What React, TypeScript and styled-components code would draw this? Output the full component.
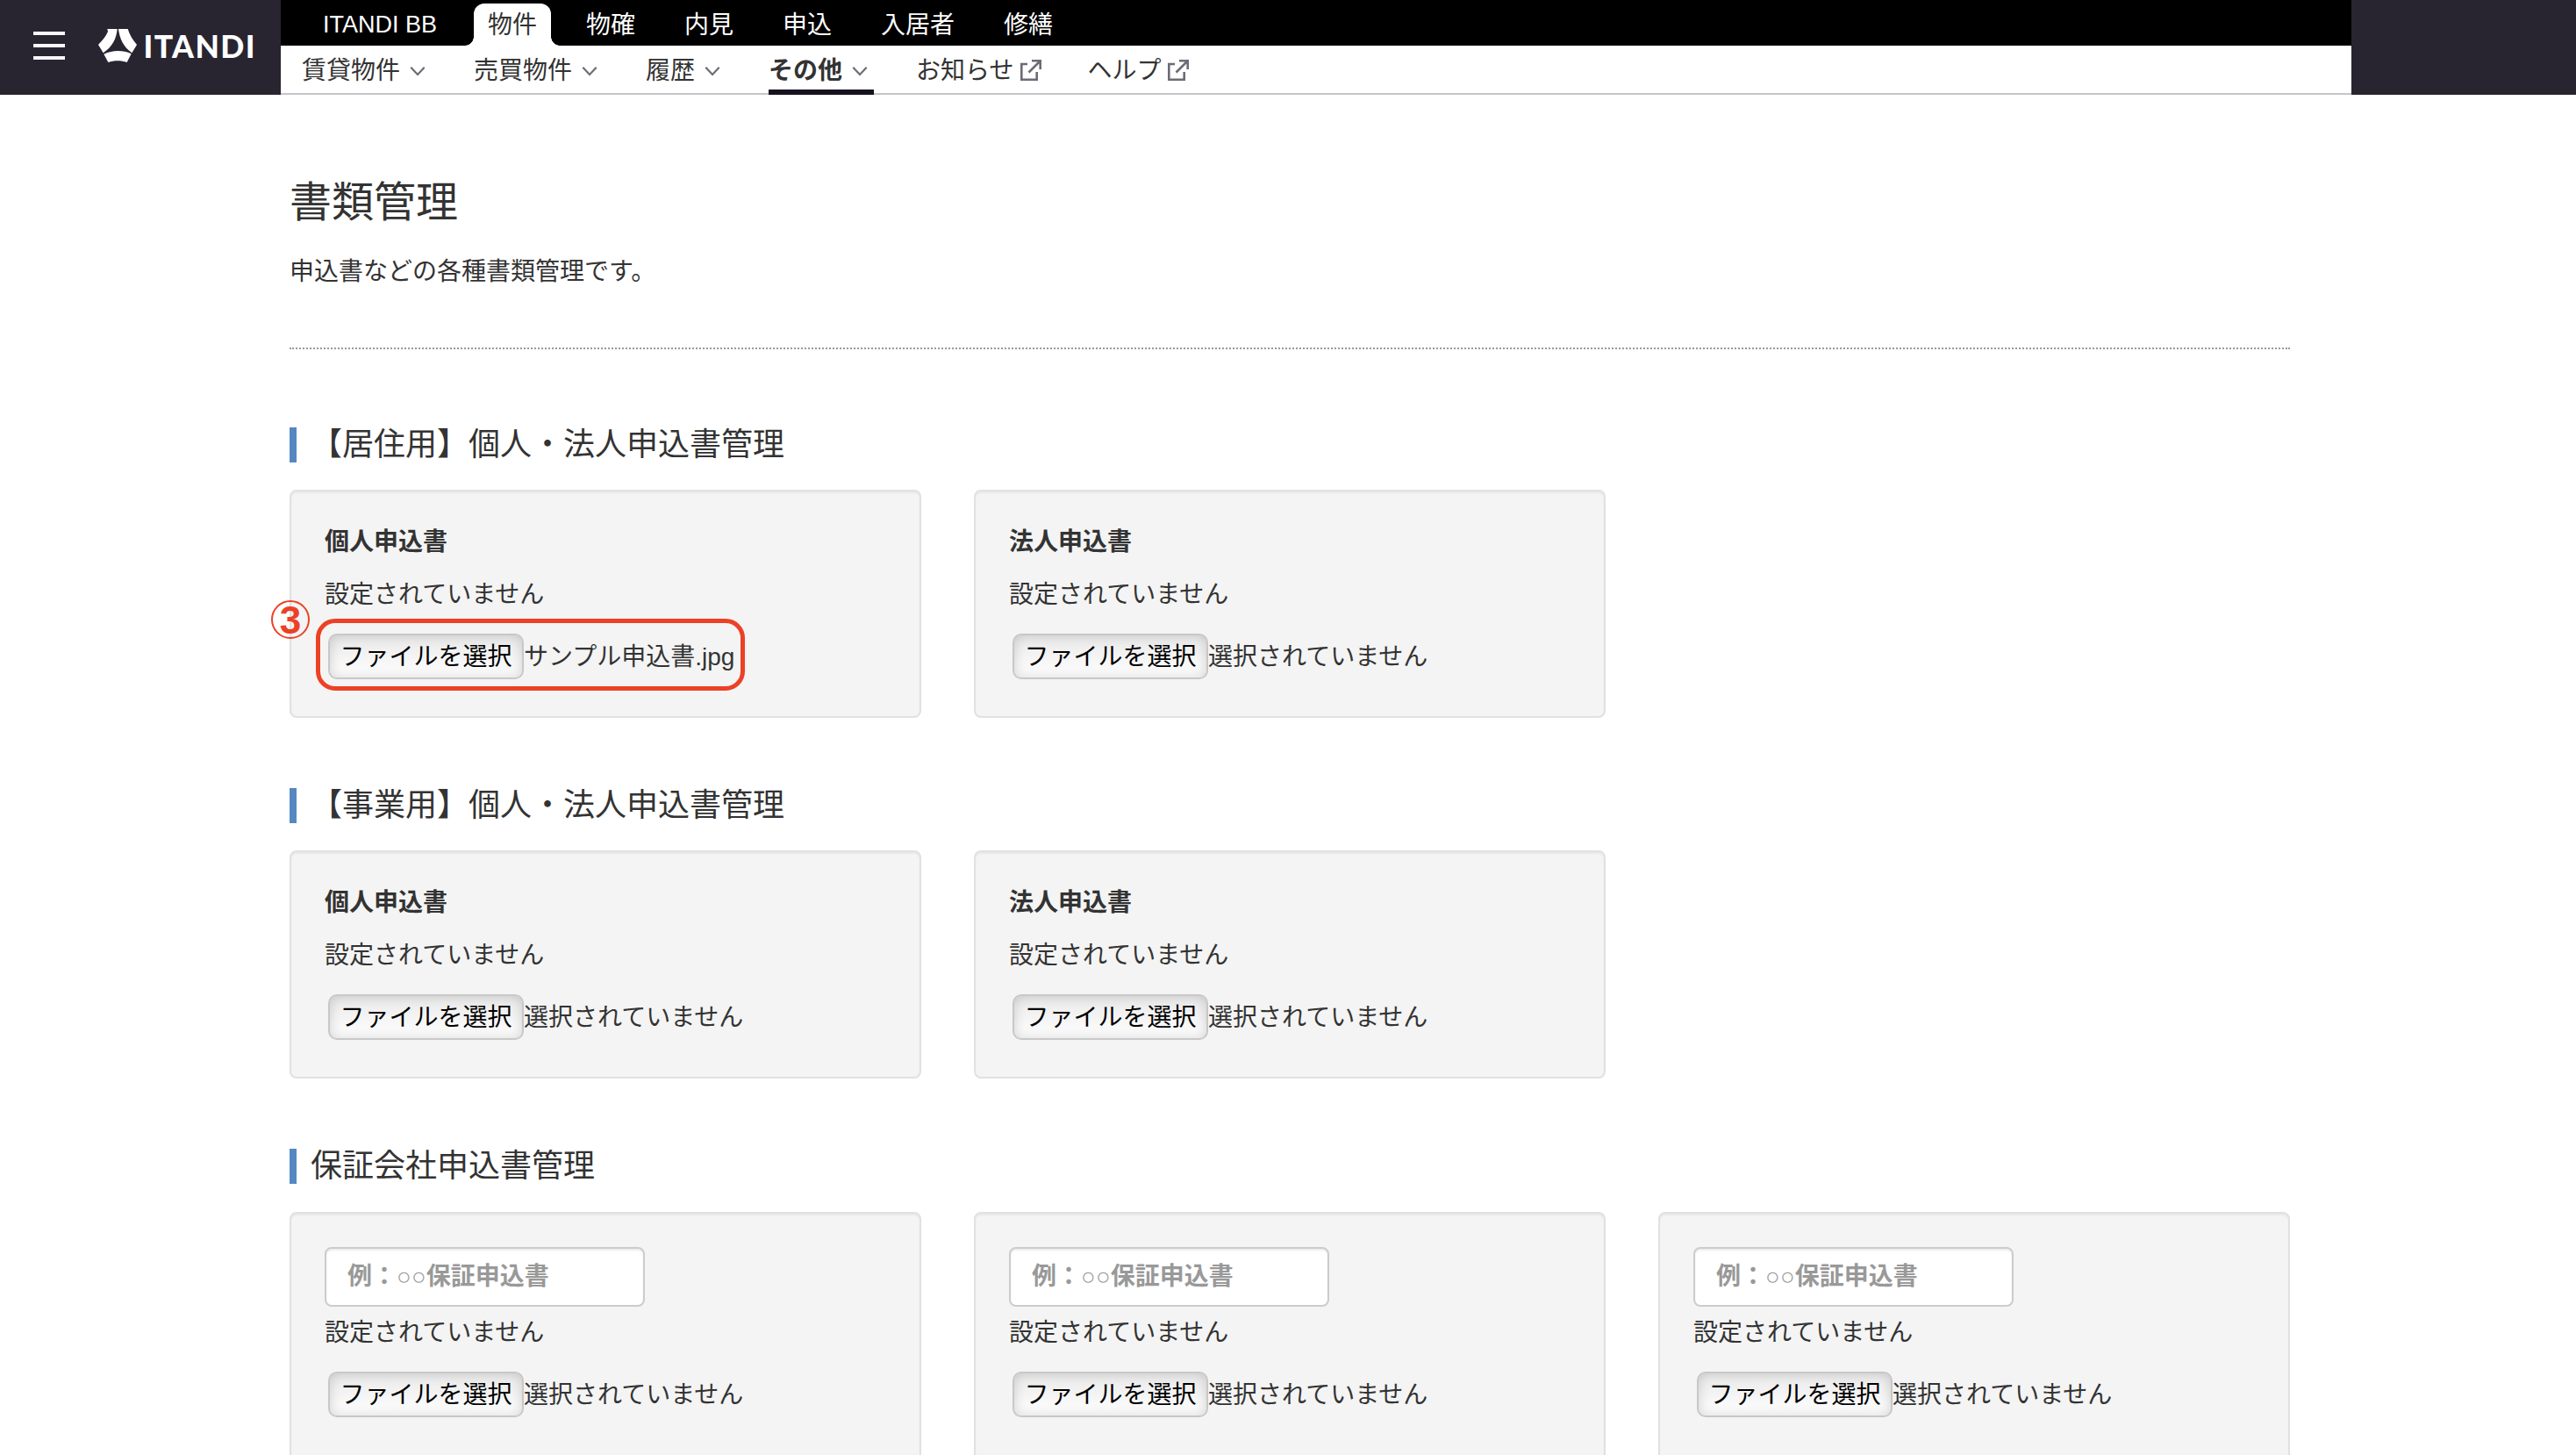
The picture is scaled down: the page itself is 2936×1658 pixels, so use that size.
import styled, { createGlobalStyle, css } from "styled-components";

const navItems = ["物件", "物確", "内見", "申込", "入居者", "修繕"];

const subNavItems = [
  { label: "賃貸物件", icon: "chevron" },
  { label: "売買物件", icon: "chevron" },
  { label: "履歴", icon: "chevron" },
  { label: "その他", icon: "chevron", active: true },
  { label: "お知らせ", icon: "external" },
  { label: "ヘルプ", icon: "external" },
];

const sections = [
  {
    title: "【居住用】個人・法人申込書管理",
    cards: [
      { name: "個人申込書", file: "サンプル申込書.jpg", step: "3" },
      { name: "法人申込書" },
    ],
  },
  {
    title: "【事業用】個人・法人申込書管理",
    cards: [{ name: "個人申込書" }, { name: "法人申込書" }],
  },
  {
    title: "保証会社申込書管理",
    cards: [{}, {}, {}],
  },
];

type CardProps = {
  name?: string;
  file?: string;
  step?: string;
};

const Chevron = () => (
  <ChevronIcon viewBox="0 0 16 10">
    <path d="M0.3 0.7L8 9L15.7 0.7" fill="none" stroke="#6d6b75" strokeWidth="2.2" />
  </ChevronIcon>
);

const External = () => (
  <ExternalIcon viewBox="0 0 24 24">
    <path
      d="M8 5H1.3V22.7H18.7V14M13 1.3H22.7V11M22.5 1.5L9.5 14.5"
      fill="none"
      stroke="#6d6b75"
      strokeWidth="2.6"
    />
  </ExternalIcon>
);

const Logo = () => (
  <LogoIcon viewBox="0 0 176 38">
    <g transform="translate(-92 -33) scale(0.33333)" fill="#fff">
      <path d="M307 99H341C338 132 324 160 293 181L276 153C290 138 302 124 309 108Z" />
      <path d="M345 99H377C383 118 394 137 408 153L391 181C362 160 349 132 345 99Z" />
      <path d="M295 185C325 171 360 171 389 184L374 213C355 206 330 206 310 213Z" />
    </g>
    <text x="51.5" y="32.5" textLength="127" fontSize="35.5">
      ITANDI
    </text>
  </LogoIcon>
);

const DocumentCard = ({ name, file, step }: CardProps) => (
  <Card>
    {name ? <CardName>{name}</CardName> : <NameInput placeholder="例：○○保証申込書" />}
    <Status $tight={!name}>設定されていません</Status>
    <FileRow>
      <FileButton>ファイルを選択</FileButton>
      <FileName>{file || "選択されていません"}</FileName>
      {step && (
        <>
          <Highlight />
          <Step>{step}</Step>
        </>
      )}
    </FileRow>
  </Card>
);

const App = () => {
  return (
    <>
      <GlobalStyle />
      <Page>
        <Header>
          <Brand>
            <MenuButton>
              <MenuLine />
              <MenuLine />
              <MenuLine />
            </MenuButton>
            <Logo />
          </Brand>
          <Navs>
            <Nav>
              <ServiceName>ITANDI BB</ServiceName>
              {navItems.map((item, i) => (
                <NavItem key={item} $active={i === 0}>
                  {item}
                </NavItem>
              ))}
            </Nav>
            <SubNav>
              {subNavItems.map(({ label, icon, active }) => (
                <SubNavItem key={label} $active={active}>
                  {label}
                  {icon === "chevron" ? <Chevron /> : <External />}
                </SubNavItem>
              ))}
            </SubNav>
          </Navs>
          <HeaderEnd />
        </Header>
        <Main>
          <Title>書類管理</Title>
          <Lead>申込書などの各種書類管理です。</Lead>
          <Divider />
          {sections.map(({ title, cards }) => (
            <Section key={title}>
              <SectionTitle>{title}</SectionTitle>
              <Cards>
                {cards.map((card, i) => (
                  <DocumentCard key={i} {...card} />
                ))}
              </Cards>
            </Section>
          ))}
        </Main>
      </Page>
    </>
  );
};

const GlobalStyle = createGlobalStyle`
  * {
    box-sizing: border-box;
  }

  body {
    margin: 0;
    background-color: #fff;
    color: #333;
    font-family: "Liberation Sans", "Noto Sans CJK JP", sans-serif;
    font-size: 28px;
    line-height: 40px;
  }
`;

const Page = styled.div`
  width: 2936px;
  height: 1658px;
  overflow: hidden;
`;

const Header = styled.header`
  display: flex;
  height: 108px;
`;

const Brand = styled.div`
  display: flex;
  width: 320px;
  padding: 33px 0 0 38px;
  background-color: #282530;
`;

const MenuButton = styled.div`
  display: flex;
  flex-direction: column;
  gap: 10px;
  width: 36px;
  margin: 3px 38px 0 0;
`;

const MenuLine = styled.span`
  height: 4px;
  background-color: #f8f7fc;
`;

const LogoIcon = styled.svg`
  width: 176px;
  height: 38px;
  overflow: visible;

  text {
    fill: #fff;
    font-family: Lato, sans-serif;
    font-weight: 900;
  }
`;

const Navs = styled.div`
  flex: 1;
`;

const HeaderEnd = styled.div`
  width: 256px;
  background-color: #282530;
`;

const Nav = styled.nav`
  display: flex;
  align-items: flex-end;
  height: 52px;
  padding-left: 48px;
  background-color: #000;
  color: #fff;
`;

const ServiceName = styled.span`
  width: 132px;
  height: 48px;
  margin-right: 40px;
  font-size: 27px;
  line-height: 49px;
  white-space: nowrap;
`;

const NavItem = styled.a<{ $active?: boolean }>`
  position: relative;
  height: 48px;
  margin-right: 24px;
  padding: 0 16px;
  line-height: 50px;

  ${({ $active }) =>
    $active &&
    css`
      border-radius: 12px 12px 0 0;
      background-color: #fff;
      color: #333;

      &::before,
      &::after {
        content: "";
        position: absolute;
        bottom: 0;
        width: 10px;
        height: 10px;
      }

      &::before {
        right: 100%;
        background: radial-gradient(circle at 0 0, #000 9.5px, #fff 10px);
      }

      &::after {
        left: 100%;
        background: radial-gradient(circle at 100% 0, #000 9.5px, #fff 10px);
      }
    `}
`;

const SubNav = styled.nav`
  display: flex;
  gap: 48px;
  height: 56px;
  padding-left: 24px;
  border-bottom: 2px solid #c6c5ca;
`;

const SubNavItem = styled.a<{ $active?: boolean }>`
  display: flex;
  height: 56px;
  line-height: 57px;
  border-bottom: 6px solid ${({ $active }) => ($active ? "#17121f" : "transparent")};
  font-weight: ${({ $active }) => ($active ? 700 : 400)};
`;

const ChevronIcon = styled.svg`
  width: 16px;
  height: 10px;
  margin: 24px 8px 0 12px;
  overflow: visible;
`;

const ExternalIcon = styled.svg`
  width: 24px;
  height: 24px;
  margin: 16px 5px 0 7px;
`;

const Main = styled.main`
  width: 2280px;
  margin-left: 330px;
  padding-top: 96px;
`;

const Title = styled.h1`
  margin: 0;
  font-size: 48px;
  font-weight: 400;
  line-height: 54px;
`;

const Lead = styled.p`
  margin: 32px 0 66px;
`;

const Divider = styled.hr`
  margin: 0 0 89px;
  border: 0;
  border-top: 2px dotted #999;
`;

const Section = styled.section`
  margin-bottom: 80px;
`;

const SectionTitle = styled.h2`
  margin: 0 0 31.6px;
  padding-left: 16px;
  border-left: 8px solid #5588c2;
  font-size: 36px;
  font-weight: 400;
  line-height: 39.6px;
`;

const Cards = styled.div`
  display: grid;
  grid-template-columns: repeat(3, 720px);
  gap: 60px;
`;

const Card = styled.div`
  height: 260px;
  padding: 38px;
  border: 2px solid #e1e1e1;
  border-radius: 8px;
  background-color: #f4f4f4;
  box-shadow: inset 0 2px 2px rgba(0, 0, 0, 0.05);

  &:has(input) {
    height: 300px;
  }
`;

const CardName = styled.div`
  font-weight: 700;
`;

const NameInput = styled.input`
  display: block;
  width: 365px;
  height: 68px;
  padding: 0 24px;
  border: 2px solid #ccc;
  border-radius: 8px;
  background-color: #fff;
  box-shadow: inset 0 2px 2px rgba(0, 0, 0, 0.075);
  font: inherit;
  font-weight: 700;

  &::placeholder {
    color: #999;
    opacity: 1;
  }
`;

const Status = styled.div<{ $tight: boolean }>`
  margin-top: ${({ $tight }) => ($tight ? 10 : 20)}px;
`;

const FileRow = styled.div`
  position: relative;
  display: flex;
  height: 52px;
  margin: 24px 0 0 4px;
`;

const FileButton = styled.button`
  width: 223px;
  height: 52px;
  padding: 2px 0 0;
  border: 2px solid #c8c8c8;
  border-radius: 10px;
  background: linear-gradient(#e9e9e9, #fff);
  box-shadow: inset 0 0 14px rgba(0, 0, 0, 0.16);
  color: #000;
  font: inherit;
  line-height: 46px;
`;

const FileName = styled.span`
  line-height: 54px;
`;

const Highlight = styled.div`
  position: absolute;
  top: -17px;
  left: -14px;
  width: 489px;
  height: 82px;
  border: 5px solid #ec4126;
  border-radius: 22px;
`;

const Step = styled.div`
  position: absolute;
  top: -38px;
  left: -65px;
  width: 44px;
  height: 44px;
  border: 2px solid #ec4126;
  border-radius: 50%;
  color: #ec4126;
  font-family: "Liberation Sans", sans-serif;
  font-size: 44px;
  font-weight: 700;
  line-height: 42px;
  text-align: center;
`;

export default App;
